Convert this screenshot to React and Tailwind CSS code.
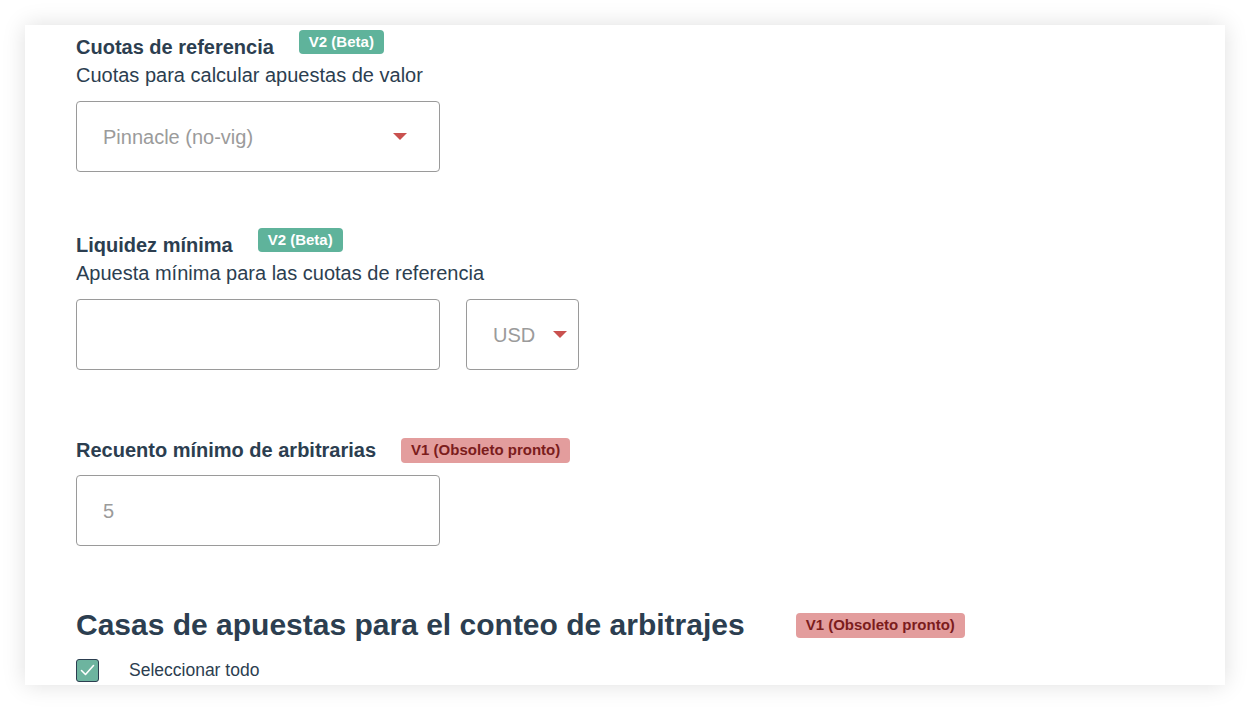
import React from 'react';

const Badge = ({ variant, children, className = '' }) => {
  const styles =
    variant === 'beta'
      ? 'bg-[#5fb39b] text-white h-[24px]'
      : 'bg-[#e39d9d] text-[#7b1c1c] h-[25px]';
  return (
    <span className={`inline-flex items-center rounded-[4px] px-[10px] text-[15px] font-bold ${styles} ${className}`}>
      {children}
    </span>
  );
};

const Caret = () => (
  <svg width="14" height="7" viewBox="0 0 14 7" className="shrink-0">
    <path d="M0 0 L14 0 L7 7 Z" fill="#c9514f" />
  </svg>
);

const SelectBox = ({ value, width, padRight = 'pr-[32px]' }) => (
  <div
    className={`h-[71px] ${width} border border-[#9a9a9a] rounded-[4px] flex items-center justify-between pl-[26px] ${padRight}`}
  >
    <span className="text-[20px] text-[#9b9b9b]">{value}</span>
    <Caret />
  </div>
);

const InputBox = ({ value }) => (
  <div className="h-[71px] w-[364px] border border-[#9a9a9a] rounded-[4px] flex items-center pl-[26px]">
    <span className="text-[20px] text-[#9b9b9b]">{value}</span>
  </div>
);

export default function App() {
  return (
    <div className="w-full h-[710px] bg-white p-[25px] font-['Liberation_Sans',Arial,sans-serif] text-[#2c3e50]">
      <div className="h-[660px] bg-white shadow-[0_0_22px_rgba(0,0,0,0.13)] overflow-hidden pl-[51px] pt-[5px]">
        {/* Cuotas de referencia */}
        <div className="flex items-center h-[32px]">
          <span className="text-[20px] font-bold leading-[24px] translate-y-[1px]">Cuotas de referencia</span>
          <Badge variant="beta" className="ml-[25px] mb-[8px]">V2 (Beta)</Badge>
        </div>
        <div className="mt-[1px] text-[20px] leading-[24px]">Cuotas para calcular apuestas de valor</div>
        <div className="mt-[14px]">
          <SelectBox value="Pinnacle (no-vig)" width="w-[364px]" />
        </div>

        {/* Liquidez mínima */}
        <div className="mt-[56px] flex items-center h-[32px]">
          <span className="text-[20px] font-bold leading-[24px] translate-y-[1px]">Liquidez mínima</span>
          <Badge variant="beta" className="ml-[25px] mb-[8px]">V2 (Beta)</Badge>
        </div>
        <div className="mt-[1px] text-[20px] leading-[24px]">Apuesta mínima para las cuotas de referencia</div>
        <div className="mt-[14px] flex gap-[26px]">
          <InputBox value="" />
          <SelectBox value="USD" width="w-[113px]" padRight="pr-[11px]" />
        </div>

        {/* Recuento mínimo */}
        <div className="mt-[67px] flex items-center h-[26px]">
          <span className="text-[20px] font-bold leading-[24px]">Recuento mínimo de arbitrarias</span>
          <Badge variant="obsolete" className="ml-[25px]">V1 (Obsoleto pronto)</Badge>
        </div>
        <div className="mt-[12px]">
          <InputBox value="5" />
        </div>

        {/* Casas de apuestas */}
        <div className="mt-[61px] flex items-center h-[36px]">
          <h2 className="text-[30px] font-bold leading-[36px]">Casas de apuestas para el conteo de arbitrajes</h2>
          <Badge variant="obsolete" className="ml-[51px]">V1 (Obsoleto pronto)</Badge>
        </div>
        <div className="mt-[14px] flex items-center">
          <span className="w-[23px] h-[23px] rounded-[3px] bg-[#6db49f] border border-[#2c3e50] flex items-center justify-center">
            <svg width="15" height="12" viewBox="0 0 15 12" fill="none">
              <path d="M1.5 6.5 L5.5 10.5 L13.5 1.5" stroke="white" strokeWidth="1.6" strokeLinecap="round" strokeLinejoin="round" />
            </svg>
          </span>
          <span className="ml-[30px] text-[17.5px]">Seleccionar todo</span>
        </div>
      </div>
    </div>
  );
}
